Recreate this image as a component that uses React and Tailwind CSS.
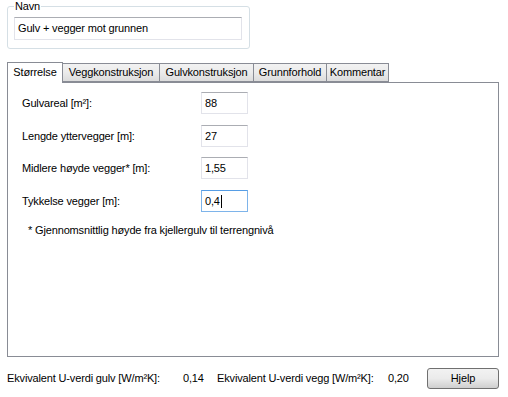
import React from 'react';

const tabs = [
  { name: 'Størrelse' },
  { name: 'Veggkonstruksjon', w: 'w-[97px]' },
  { name: 'Gulvkonstruksjon', w: 'w-[94px]' },
  { name: 'Grunnforhold', w: 'w-[73px]' },
  { name: 'Kommentar', w: 'w-[62px]' },
];

const rows = [
  { label: 'Gulvareal [m²]:', value: '88', mt: 'mt-[9px]' },
  { label: 'Lengde yttervegger [m]:', value: '27', mt: 'mt-[11px]' },
  { label: 'Midlere høyde vegger* [m]:', value: '1,55', mt: 'mt-[10px]' },
  { label: 'Tykkelse vegger [m]:', value: '0,4', mt: 'mt-[11px]', focused: true },
];

// Win7-style textbox
function TextBox({ value, focused, className = '' }) {
  return (
    <div
      className={`flex items-center border bg-white pl-[3px] ${
        focused
          ? 'border-[#7eb4ea] border-t-[#569de5]'
          : 'border-[#e2e3ea] border-t-[#abadb3]'
      } ${className}`}
    >
      <span>{value}</span>
      {focused && <span className="ml-[1px] h-[13px] w-px bg-black" />}
    </div>
  );
}

export default function App() {
  return (
    <div
      className="w-[508px] h-[397px] bg-white text-[11px] leading-[13px] tracking-[-0.15px] text-black overflow-hidden"
      style={{ fontFamily: '"Liberation Sans", Arial, sans-serif' }}
    >
      {/* Navn group box */}
      <fieldset className="ml-[7px] w-[243px] h-[49px] border border-[#d5dfe5] rounded-[3px] px-[6px]">
        <legend className="px-[1px] leading-[13px]">Navn</legend>
        <TextBox value="Gulv + vegger mot grunnen" className="mt-[4px] w-[228px] h-[23px]" />
      </fieldset>

      {/* Tabs */}
      <div className="mt-[13px] flex items-end pl-[7px]">
        {tabs.map((t, i) =>
          i === 0 ? (
            <div
              key={t.name}
              className="relative z-10 -mb-px flex h-[21px] w-[56px] items-start justify-center border border-b-0 border-[#898c95] bg-white pt-[3px]"
            >
              {t.name}
            </div>
          ) : (
            <div
              key={t.name}
              className={`flex h-[19px] items-center justify-center border-y border-r border-[#898c95] bg-gradient-to-b from-[#f2f2f2] via-[#ebebeb] to-[#dcdcdc] ${t.w}`}
            >
              {t.name}
            </div>
          )
        )}
      </div>

      {/* Tab panel */}
      <div className="ml-[7px] flex h-[275px] w-[492px] flex-col border border-[#898c95] bg-white pl-[14px]">
        {rows.map((r) => (
          <div key={r.label} className={`flex h-[22px] items-center ${r.mt}`}>
            <span className="w-[179px]">{r.label}</span>
            <TextBox value={r.value} focused={r.focused} className="h-[22px] w-[47px]" />
          </div>
        ))}
        <div className="mt-[12px] pl-[6px]">* Gjennomsnittlig høyde fra kjellergulv til terrengnivå</div>
      </div>

      {/* Bottom bar */}
      <div className="flex items-center pl-[7px] pt-[11px]">
        <span className="w-[176px]">Ekvivalent U-verdi gulv [W/m²K]:</span>
        <span className="w-[34px]">0,14</span>
        <span className="w-[171px]">Ekvivalent U-verdi vegg [W/m²K]:</span>
        <span>0,20</span>
        <button className="ml-auto mr-[9px] h-[21px] w-[72px] rounded-[3px] border border-[#707070] bg-gradient-to-b from-[#f2f2f2] via-[#ebebeb] to-[#cfcfcf]">
          Hjelp
        </button>
      </div>
    </div>
  );
}
